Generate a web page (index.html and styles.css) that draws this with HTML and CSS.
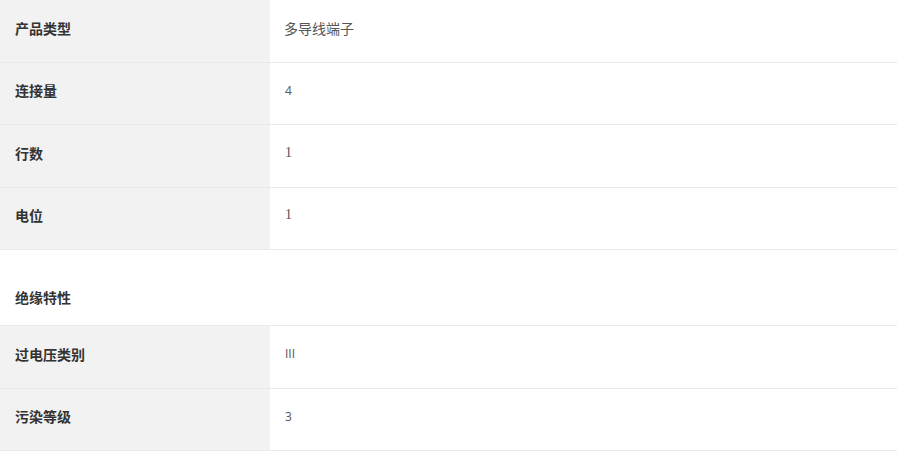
FILE: index.html
```html
<!DOCTYPE html>
<html lang="zh">
<head>
<meta charset="utf-8">
<link rel="stylesheet" href="styles.css">
</head>
<body>
<div class="specs">
  <div class="row"><div class="label">产品类型</div><div class="value">多导线端子</div></div>
  <div class="row"><div class="label">连接量</div><div class="value small">4</div></div>
  <div class="row"><div class="label">行数</div><div class="value num">1</div></div>
  <div class="row"><div class="label">电位</div><div class="value num">1</div></div>
  <div class="section">绝缘特性</div>
  <div class="row"><div class="label">过电压类别</div><div class="value small">III</div></div>
  <div class="row"><div class="label">污染等级</div><div class="value small">3</div></div>
</div>
</body>
</html>
```

FILE: styles.css
```css
html, body {
  margin: 0;
  padding: 0;
  background: #fff;
}
body {
  font-family: "Noto Sans CJK SC", "Noto Sans", sans-serif;
  color: #333;
}
.specs {
  width: 897px;
}
.row {
  display: grid;
  grid-template-columns: 270px 1fr;
  height: 62.5px;
  box-sizing: border-box;
  border-bottom: 1px solid #e9e9e9;
}
.label {
  background: #f2f2f2;
  padding-left: 15px;
  font-size: 14px;
  font-weight: bold;
  color: #333;
  display: flex;
  align-items: center;
  padding-bottom: 6px;
}
.value {
  padding-left: 14px;
  font-size: 14px;
  color: #555;
  display: flex;
  align-items: center;
  padding-bottom: 6px;
}
.value.small {
  font-size: 12px;
  font-family: "Open Sans", "Noto Sans CJK SC", sans-serif;
  padding-left: 15px;
}
.value.num {
  font-size: 14px;
  font-family: "Liberation Serif", "Noto Sans CJK SC", serif;
  padding-left: 15px;
}
.section {
  height: 76px;
  box-sizing: border-box;
  border-bottom: 1px solid #e9e9e9;
  padding-left: 15px;
  padding-top: 36px;
  font-size: 14px;
  font-weight: bold;
  color: #333;
  line-height: 22px;
}
```
